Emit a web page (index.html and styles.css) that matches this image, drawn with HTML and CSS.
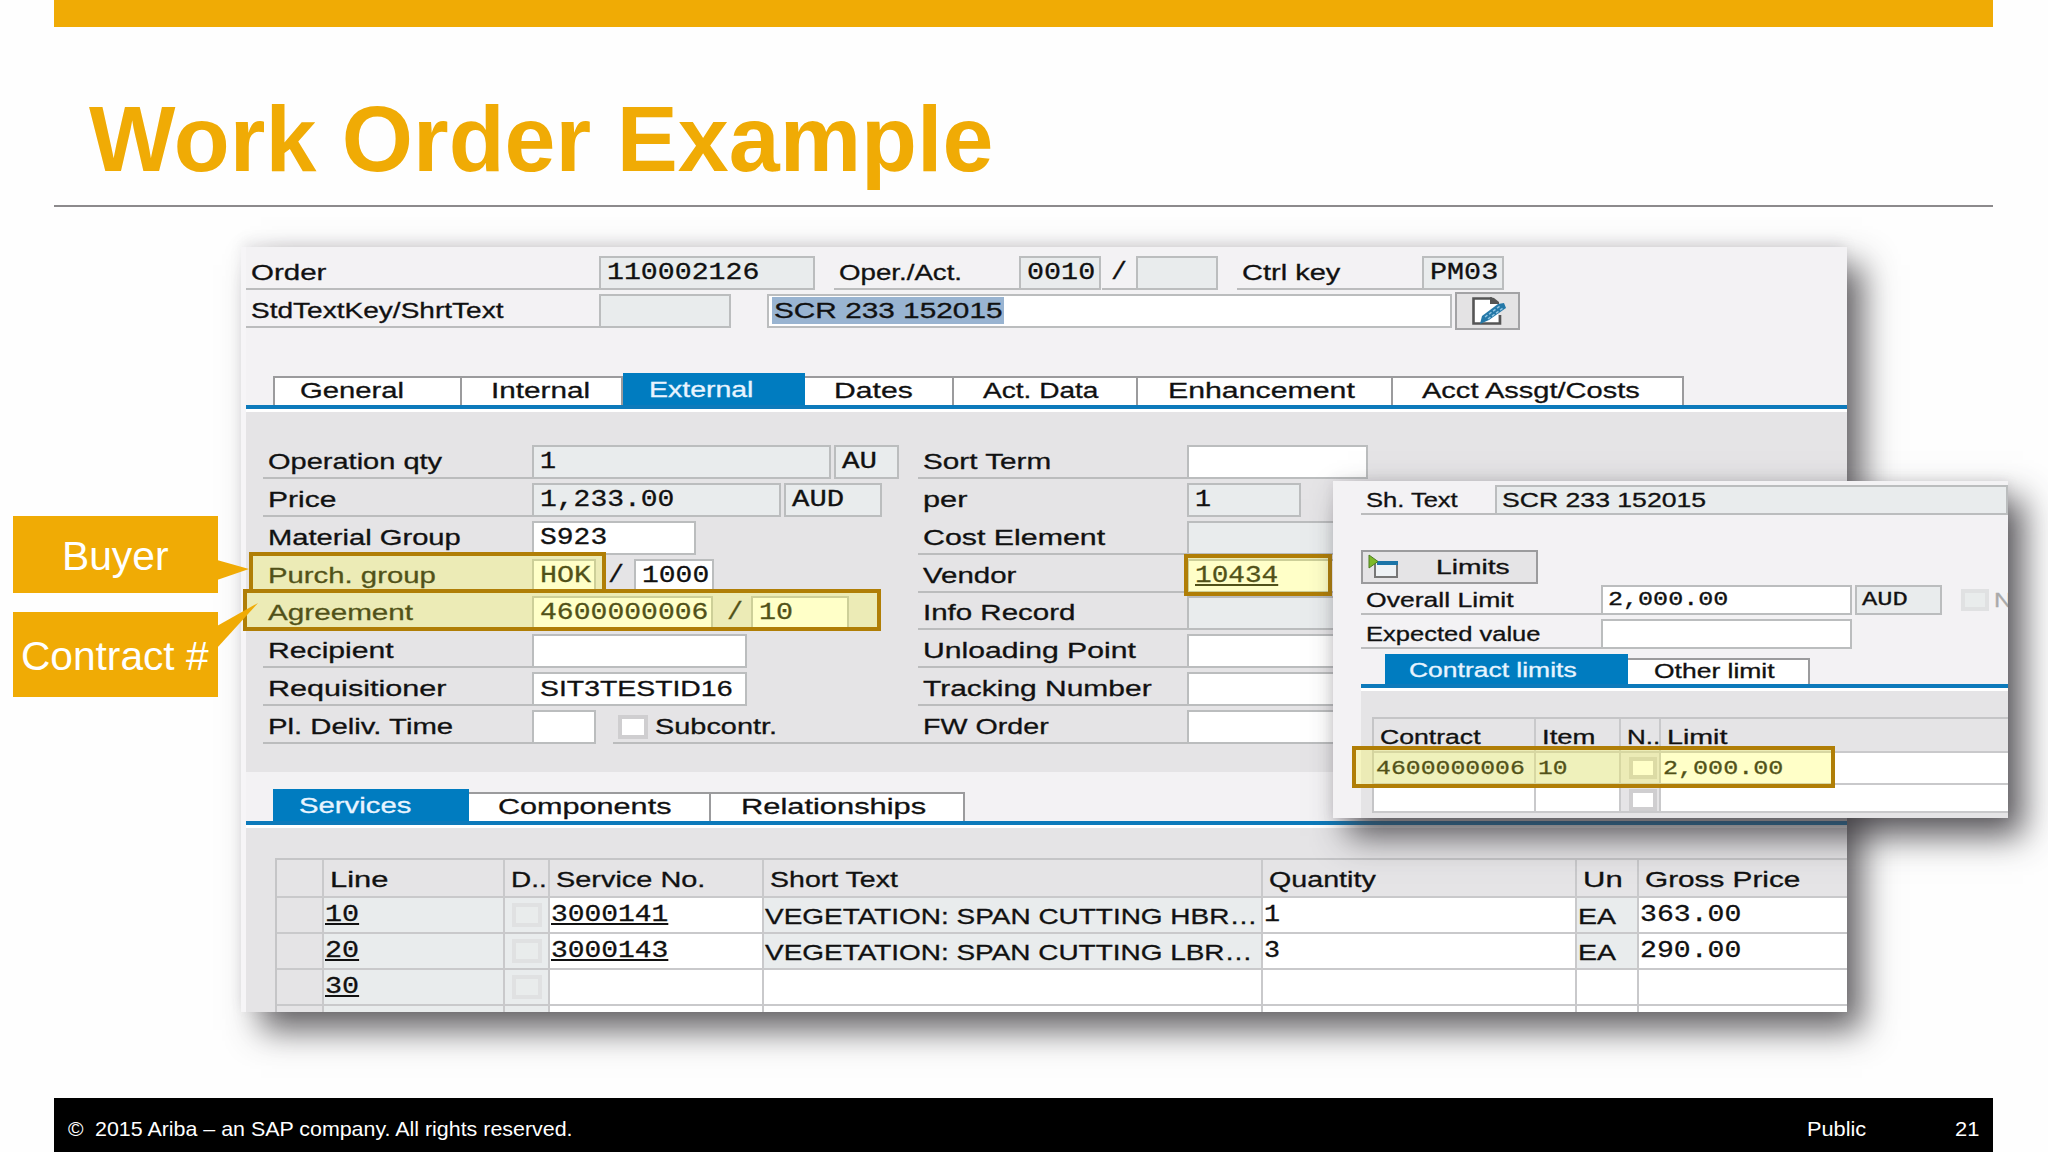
FILE: index.html
```
<!DOCTYPE html>
<html lang="en">
<head>
  <meta charset="UTF-8" />
  <meta name="viewport" content="width=device-width, initial-scale=1.0"/>
  <title>Work Order Example</title>

  <link rel="stylesheet" href="styles.css">
</head>
<body>

  <div class="top-bar"></div>

  <header>
    <h1><span data-w="904">Work Order Example</span></h1>
  </header>

  <main class="stage">

    <!-- Work order screen -->
    <section class="panel order-panel">
      <div class="row">
        <div class="label w-head"><span data-w="76">Order</span></div>
        <div class="field w-order mono"><span data-w="152">110002126</span></div>
        <div class="label w-oper"><span data-w="123">Oper./Act.</span></div>
        <div class="field w-code mono"><span data-w="68">0010</span></div>
        <div class="label w-slash mono"><span data-w="16">/</span></div>
        <div class="field w-code"></div>
        <div class="label w-ctrl"><span data-w="98">Ctrl key</span></div>
        <div class="field w-code mono"><span data-w="68">PM03</span></div>
      </div>
      <div class="row">
        <div class="label w-head"><span data-w="253">StdTextKey/ShrtText</span></div>
        <div class="field w-std"></div>
        <div class="field input w-short"><div class="selected"><span data-w="229">SCR 233 152015</span></div></div>
        <div class="edit-btn">
          <svg width="38" height="31" viewBox="0 0 38 31">
            <path d="M4.500 2.500H22L29 8V27.500H4.500Z" fill="#fff"/>
            <path d="M23 2.500H4.500V27.500H31V19" fill="none" stroke="#555" stroke-width="2.6"/>
            <path d="M21 1V8H30V6L25 2Z" fill="#555"/>
            <path d="M11 28L13 20L29 8L35 7L37 12L20 24Z" fill="#2478a8"/>
            <path d="M16 21L31 10M19 23L34 12" stroke="#8fc3e0" stroke-width="1.5" stroke-dasharray="3 2"/>
          </svg>
        </div>
      </div>

      <nav class="tabs order-tabs">
        <div class="tab t-general"><span data-w="104">General</span></div>
        <div class="tab t-internal"><span data-w="99">Internal</span></div>
        <div class="tab active t-external"><span data-w="105">External</span></div>
        <div class="tab t-dates"><span data-w="79">Dates</span></div>
        <div class="tab t-actdata"><span data-w="116">Act. Data</span></div>
        <div class="tab t-enhance"><span data-w="187">Enhancement</span></div>
        <div class="tab t-costs"><span data-w="218">Acct Assgt/Costs</span></div>
      </nav>

      <div class="form">
        <div class="form-left">
          <div class="row">
            <div class="label w-left"><span data-w="174">Operation qty</span></div>
            <div class="field w-299 mono"><span data-w="16">1</span></div>
            <div class="field w-65 gap mono"><span data-w="35">AU</span></div>
          </div>
          <div class="row">
            <div class="label w-left"><span data-w="68">Price</span></div>
            <div class="field w-249 mono"><span data-w="134">1,233.00</span></div>
            <div class="field w-98 gap mono"><span data-w="52">AUD</span></div>
          </div>
          <div class="row">
            <div class="label w-left"><span data-w="193">Material Group</span></div>
            <div class="field input w-164 mono"><span data-w="67">S923</span></div>
          </div>
          <div class="row">
            <div class="label w-left"><span data-w="168">Purch. group</span></div>
            <div class="field input w-64 mono"><span data-w="51">HOK</span></div>
            <div class="sep mono"><span data-w="16">/</span></div>
            <div class="field input w-80 mono"><span data-w="67">1000</span></div>
          </div>
          <div class="row">
            <div class="label w-left"><span data-w="145">Agreement</span></div>
            <div class="field input w-181 mono"><span data-w="168">4600000006</span></div>
            <div class="sep sep-item mono"><span data-w="16">/</span></div>
            <div class="field input w-98 mono"><span data-w="34">10</span></div>
          </div>
          <div class="row">
            <div class="label w-left"><span data-w="126">Recipient</span></div>
            <div class="field input w-215"></div>
          </div>
          <div class="row">
            <div class="label w-left"><span data-w="178">Requisitioner</span></div>
            <div class="field input w-215"><span data-w="193">SIT3TESTID16</span></div>
          </div>
          <div class="row">
            <div class="label w-left"><span data-w="185">Pl. Deliv. Time</span></div>
            <div class="field input w-64"></div>
            <div class="label w-subcontr"><i class="check"></i><span data-w="122">Subcontr.</span></div>
          </div>
        </div>

        <div class="form-right">
          <div class="row">
            <div class="label w-right"><span data-w="128">Sort Term</span></div>
            <div class="field input w-181"></div>
          </div>
          <div class="row">
            <div class="label bare w-right"><span data-w="45">per</span></div>
            <div class="field w-114 mono"><span data-w="16">1</span></div>
          </div>
          <div class="row">
            <div class="label w-right"><span data-w="182">Cost Element</span></div>
            <div class="field w-215"></div>
          </div>
          <div class="row">
            <div class="label w-right"><span data-w="93">Vendor</span></div>
            <div class="field input w-215 mono"><span class="link" data-w="83">10434</span></div>
          </div>
          <div class="row">
            <div class="label w-right"><span data-w="152">Info Record</span></div>
            <div class="field w-215"></div>
          </div>
          <div class="row">
            <div class="label w-right"><span data-w="213">Unloading Point</span></div>
            <div class="field input w-215"></div>
          </div>
          <div class="row">
            <div class="label w-right"><span data-w="229">Tracking Number</span></div>
            <div class="field input w-215"></div>
          </div>
          <div class="row">
            <div class="label w-right"><span data-w="126">FW Order</span></div>
            <div class="field input w-215"></div>
          </div>
        </div>
      </div>

      <nav class="tabs service-tabs">
        <div class="tab active t-services"><span data-w="112">Services</span></div>
        <div class="tab t-components"><span data-w="174">Components</span></div>
        <div class="tab t-relations"><span data-w="185">Relationships</span></div>
      </nav>

      <div class="table-area">
        <div class="grid services">
          <div class="th"></div>
          <div class="th"><span data-w="59">Line</span></div>
          <div class="th"><span data-w="36">D..</span></div>
          <div class="th"><span data-w="149">Service No.</span></div>
          <div class="th"><span data-w="128">Short Text</span></div>
          <div class="th"><span data-w="107">Quantity</span></div>
          <div class="th"><span data-w="40">Un</span></div>
          <div class="th"><span data-w="156">Gross Price</span></div>

          <div class="td head"></div>
          <div class="td off mono"><span class="link" data-w="34">10</span></div>
          <div class="td off"><i class="check dim"></i></div>
          <div class="td mono"><span class="link" data-w="117">3000141</span></div>
          <div class="td off"><span data-w="492">VEGETATION: SPAN CUTTING HBR…</span></div>
          <div class="td mono"><span data-w="16">1</span></div>
          <div class="td off"><span data-w="38">EA</span></div>
          <div class="td mono"><span data-w="101">363.00</span></div>

          <div class="td head"></div>
          <div class="td off mono"><span class="link" data-w="34">20</span></div>
          <div class="td off"><i class="check dim"></i></div>
          <div class="td mono"><span class="link" data-w="117">3000143</span></div>
          <div class="td off"><span data-w="488">VEGETATION: SPAN CUTTING LBR…</span></div>
          <div class="td mono"><span data-w="16">3</span></div>
          <div class="td off"><span data-w="38">EA</span></div>
          <div class="td mono"><span data-w="101">290.00</span></div>

          <div class="td head"></div>
          <div class="td off mono"><span class="link" data-w="34">30</span></div>
          <div class="td off"><i class="check dim"></i></div>
          <div class="td"></div>
          <div class="td"></div>
          <div class="td"></div>
          <div class="td"></div>
          <div class="td"></div>

          <div class="td head"></div>
          <div class="td off"></div>
          <div class="td off"></div>
          <div class="td"></div>
          <div class="td"></div>
          <div class="td"></div>
          <div class="td"></div>
          <div class="td"></div>
        </div>
      </div>
    </section>

    <div class="highlight hl-vendor"></div>

    <!-- Limits screen -->
    <section class="panel limits-panel">
      <div class="limits-body">
        <div class="row">
          <div class="label w-sh"><span data-w="92">Sh. Text</span></div>
          <div class="field w-rest"><span data-w="204">SCR 233 152015</span></div>
        </div>

        <div class="limits-btn">
          <svg width="34" height="28" viewBox="0 0 34 28">
            <rect x="8" y="9" width="22" height="15" fill="#eef2f5" stroke="#777" stroke-width="2"/>
            <rect x="10" y="8" width="21" height="4" fill="#1b75a8"/>
            <path d="M2 2L11 8.500L2 15Z" fill="#7db928" stroke="#4c7d22" stroke-width="1"/>
          </svg>
          <span data-w="73">Limits</span>
        </div>

        <div class="row">
          <div class="label w-limit"><span data-w="147">Overall Limit</span></div>
          <div class="field input w-amount mono"><span data-w="120">2,000.00</span></div>
          <div class="field w-cur mono"><span data-w="46">AUD</span></div>
          <div class="no-limit"><i class="check dim"></i><span data-w="18">N</span></div>
        </div>
        <div class="row">
          <div class="label w-limit"><span data-w="175">Expected value</span></div>
          <div class="field input w-amount"></div>
        </div>

        <nav class="tabs limit-tabs">
          <div class="tab active t-contract"><span data-w="168">Contract limits</span></div>
          <div class="tab t-other"><span data-w="121">Other limit</span></div>
        </nav>

        <div class="table-area">
          <div class="grid contracts">
            <div class="th"><span data-w="100">Contract</span></div>
            <div class="th"><span data-w="53">Item</span></div>
            <div class="th"><span data-w="33">N..</span></div>
            <div class="th"><span data-w="61">Limit</span></div>

            <div class="td off mono"><span data-w="149">4600000006</span></div>
            <div class="td off mono"><span data-w="30">10</span></div>
            <div class="td head"><i class="check"></i></div>
            <div class="td mono"><span data-w="120">2,000.00</span></div>

            <div class="td"></div>
            <div class="td"></div>
            <div class="td head"><i class="check"></i></div>
            <div class="td"></div>
          </div>
        </div>
      </div>
    </section>

    <!-- Highlights and callouts -->
    <div class="highlight hl-group"></div>
    <div class="highlight hl-agreement"></div>
    <div class="highlight hl-contract"></div>

    <div class="callout buyer"><span data-w="107">Buyer</span></div>
    <div class="callout contract"><span data-w="188">Contract #</span></div>
    <svg class="tails" width="60" height="100" viewBox="0 0 60 100">
      <path d="M0 30L32 39L0 50Z" transform="translate(0 -20)" />
      <path d="M0 76L41 53L0 98Z" />
    </svg>
  </main>

  <footer>
    <span class="sign">©</span>
    <span data-w="478">2015 Ariba – an SAP company. All rights reserved.</span>
    <span class="public" data-w="59">Public</span>
    <span class="page" data-w="24">21</span>
  </footer>

  <script src="fit.js"></script>
</body>
</html>
```
FILE: styles.css
```
* {
  margin: 0;
  padding: 0;
  box-sizing: border-box;
}

body {
  width: 2048px;
  height: 1152px;
  overflow: hidden;
  background: #fefefe;
  color: #111;
  font-family: "Liberation Sans", Arial, sans-serif;
  display: flex;
  flex-direction: column;
}

span[data-w] {
  display: inline-block;
  white-space: pre;
  transform-origin: 0 50%;
}

.top-bar {
  height: 27px;
  margin: 0 55px 0 54px;
  background: #f0ab05;
}

header {
  height: 180px;
  margin: 0 55px 0 54px;
  padding: 59px 0 0 35px;
  border-bottom: 2px solid #8c8a8c;
}

h1 {
  font-size: 92px;
  line-height: 106px;
  color: #f0ab05;
}

.stage {
  position: relative;
  height: 891px;
}

/* Screens */

.panel {
  position: absolute;
  overflow: hidden;
  background: #f3f2f4;
  -webkit-text-stroke: 0.3px;
}

.order-panel {
  left: 246px;
  top: 40px;
  width: 1601px;
  height: 765px;
  padding-top: 9px;
  font-size: 22.5px;
  box-shadow: -5px 0 0 #f6f5f7, 15px 18px 32px rgba(70, 68, 72, 0.85), -3px -5px 12px rgba(120, 110, 130, 0.14);
}

.row {
  display: flex;
  height: 38px;
  line-height: 34px;
}

.label {
  height: 34px;
  padding-left: 5px;
  border-bottom: 2px solid #bbbcbd;
  white-space: nowrap;
}

.label.bare {
  border-bottom-color: transparent;
}

.field {
  height: 34px;
  line-height: 30px;
  padding-left: 6px;
  border: 2px solid #bbbdbe;
  background: #e9eced;
  white-space: nowrap;
}

.field.input {
  background: #fff;
}

.mono {
  font-family: "Liberation Mono", "Courier New", monospace;
  font-size: 1.04em;
}

.link {
  text-decoration: underline;
  text-decoration-thickness: 2px;
  text-underline-offset: 2px;
}

.w-head { width: 353px; }
.w-order { width: 216px; }
.w-oper { width: 185px; margin-left: 19px; }
.w-code { width: 82px; }
.w-slash { width: 34px; margin-left: 1px; padding-left: 9px; }
.w-ctrl { width: 185px; margin-left: 19px; }
.w-std { width: 132px; }
.w-short { width: 685px; margin-left: 36px; }
.w-left { width: 269px; }
.w-right { width: 269px; }
.w-64 { width: 64px; }
.w-65 { width: 65px; }
.w-80 { width: 80px; }
.w-98 { width: 98px; }
.w-114 { width: 114px; }
.w-164 { width: 164px; }
.w-181 { width: 181px; }
.w-215 { width: 215px; }
.w-249 { width: 249px; }
.w-299 { width: 299px; }
.gap { margin-left: 3px; }

.field.w-short {
  padding: 1px 0 0 3px;
}

.selected {
  width: 232px;
  height: 27px;
  padding-left: 2px;
  line-height: 28px;
  background: #99b4d1;
}

.edit-btn {
  width: 65px;
  height: 38px;
  margin: -2px 0 0 3px;
  padding: 2px 0 0 12px;
  border: 2px solid #a3a3a5;
  background: #e4e3e4;
  line-height: 0;
}

.sep {
  width: 38px;
  padding-left: 12px;
}

.sep-item {
  padding-left: 14px;
}

/* Tabs */

.tabs {
  display: flex;
  align-items: flex-end;
  height: 39px;
  padding-left: 27px;
  border-bottom: 3px solid #fff;
  box-shadow: inset 0 -4px 0 #0d7abb;
  padding-bottom: 4px;
}

.order-tabs {
  margin-top: 41px;
}

.service-tabs {
  margin-top: 17px;
}

.tab {
  height: 29px;
  line-height: 25px;
  padding-left: 29px;
  border-top: 2px solid #9b9b9d;
  border-right: 2px solid #9b9b9d;
  background: #fff;
  white-space: nowrap;
}

.tab:first-child {
  border-left: 2px solid #9b9b9d;
}

.tab.active {
  height: 32px;
  line-height: 33px;
  border: none;
  background: #007cc0;
  color: #e8f4ff;
}

.t-general { width: 189px; padding-left: 25px; }
.t-internal { width: 161px; }
.t-external { width: 182px; padding-left: 26px; }
.t-dates { width: 149px; }
.t-actdata { width: 184px; }
.t-enhance { width: 255px; padding-left: 30px; }
.t-costs { width: 291px; }
.t-services { width: 196px; padding-left: 26px; }
.t-components { width: 242px; }
.t-relations { width: 254px; padding-left: 30px; }

/* Order form */

.form {
  display: flex;
  height: 360px;
  padding: 33px 0 0 17px;
  background: #e5e4e6;
}

.form .row {
  height: 37.86px;
}

.form-left {
  width: 655px;
}

.w-subcontr {
  display: flex;
  width: 305px;
  margin-left: 17px;
}

.check {
  width: 30px;
  height: 24px;
  margin: 5px 7px 0 0;
  flex-shrink: 0;
  display: block;
  border: 4px solid #cfced0;
  background: #fff;
}

.check.dim {
  border-color: #e0e1e2;
  background: #e9ecec;
}

/* Tables */

.table-area {
  padding: 30px 0 0 29px;
  background: #e5e4e6;
}

.grid {
  display: grid;
  border-top: 2px solid #c5c5c7;
  border-left: 2px solid #c5c5c7;
}

.services {
  grid-template-columns: 47px 181px 45px 214px 499px 314px 62px 211px;
  grid-template-rows: 38px repeat(4, 36px);
}

.th {
  padding: 4px 0 0 6px;
  line-height: 37px;
  border-right: 2px solid #c9c9cb;
  border-bottom: 2px solid #c9c9cb;
  white-space: nowrap;
}

.services .th {
  padding-top: 0;
  line-height: 39px;
}

.td {
  padding-left: 1px;
  line-height: 37px;
  border-right: 2px solid #c9c9cb;
  border-bottom: 2px solid #c9c9cb;
  background: #fff;
  white-space: nowrap;
}

.services .td.mono {
  line-height: 35px;
}

.td.off {
  background: #e9eced;
}

.td.head {
  background: #e5e4e6;
}

.td .check {
  margin: 5px 0 0 6px;
}

/* Limits screen */

.limits-panel {
  left: 1333px;
  top: 274px;
  width: 675px;
  height: 337px;
  padding-left: 28px;
  font-size: 19.7px;
  box-shadow: 15px 18px 32px rgba(60, 58, 62, 0.85), 0 0 10px rgba(120, 110, 130, 0.15);
}

.limits-body {
  padding-top: 4px;
}

.limits-panel .row {
  height: 34px;
  line-height: 30px;
}

.limits-panel .label {
  height: 30px;
  line-height: 30px;
}

.limits-panel .field {
  height: 30px;
  line-height: 26px;
  padding-left: 5px;
}

.w-sh { width: 136px; }
.w-rest { width: 520px; }
.w-limit { width: 240px; }
.w-amount { width: 251px; }
.w-cur { width: 87px; margin-left: 3px; }

.limits-btn {
  display: flex;
  width: 177px;
  height: 34px;
  margin: 31px 0 1px;
  padding: 1px 0 0 4px;
  border: 2px solid #9b9b9d;
  background: #e5e4e6;
  line-height: 28px;
}

.limits-btn span {
  margin-left: 35px;
}

.no-limit {
  display: flex;
  margin-left: 19px;
  color: #aaa;
}

.limits-panel .check {
  width: 28px;
  height: 22px;
  margin: 4px 5px 0 0;
}

.limit-tabs {
  height: 37px;
  margin-top: 1px;
  padding-left: 24px;
}

.limit-tabs .tab {
  height: 26px;
  line-height: 22px;
  padding-left: 26px;
}

.limit-tabs .tab.active {
  height: 30px;
  line-height: 33px;
  padding-left: 24px;
  border: none;
}

.t-contract { width: 243px; }
.t-other { width: 182px; }

.limits-panel .table-area {
  height: 130px;
  padding: 26px 0 0 11px;
}

.contracts {
  grid-template-columns: 162px 85px 40px 360px;
  grid-template-rows: 34px 32px 28px;
}

.contracts .th {
  padding-top: 1px;
  line-height: 34px;
}

.contracts .td {
  line-height: 32px;
  padding-left: 2px;
}

.limits-panel .td .check {
  margin: 4px 0 0 6px;
}

/* Marks laid over the screens */

.highlight {
  position: absolute;
  border: 4px solid #b07e06;
  background: rgba(255, 255, 51, 0.27);
}

.hl-group {
  left: 249px;
  top: 345px;
  width: 357px;
  height: 41px;
}

.hl-agreement {
  left: 243px;
  top: 382px;
  width: 638px;
  height: 42px;
}

.hl-vendor {
  left: 1184px;
  top: 347px;
  width: 148px;
  height: 42px;
}

.hl-contract {
  left: 1352px;
  top: 539px;
  width: 483px;
  height: 42px;
}

.callout {
  position: absolute;
  left: 13px;
  width: 205px;
  background: #f0ab05;
  color: #fff;
  font-size: 40px;
  white-space: nowrap;
}

.buyer {
  top: 309px;
  height: 77px;
  padding-left: 49px;
  line-height: 81px;
}

.contract {
  top: 405px;
  height: 85px;
  padding-left: 8px;
  line-height: 88px;
}

.tails {
  position: absolute;
  left: 217px;
  top: 343px;
  fill: #f0ab05;
}

footer {
  display: flex;
  height: 54px;
  margin: 0 55px 0 54px;
  padding-left: 14px;
  background: #000;
  color: #fff;
  font-size: 21px;
  line-height: 61px;
}

.sign {
  width: 27px;
}

.public {
  margin-left: auto;
  margin-right: 90px;
}

footer .page {
  margin-right: 15px;
}
```
FILE: fit.js
```
// Stretch each caption horizontally to the width it has on the SAP screens
document.querySelectorAll("span[data-w]").forEach((el) => {
  const scale = parseFloat(el.dataset.w) / el.offsetWidth;
  el.style.transform = `scaleX(${scale})`;
});
```
